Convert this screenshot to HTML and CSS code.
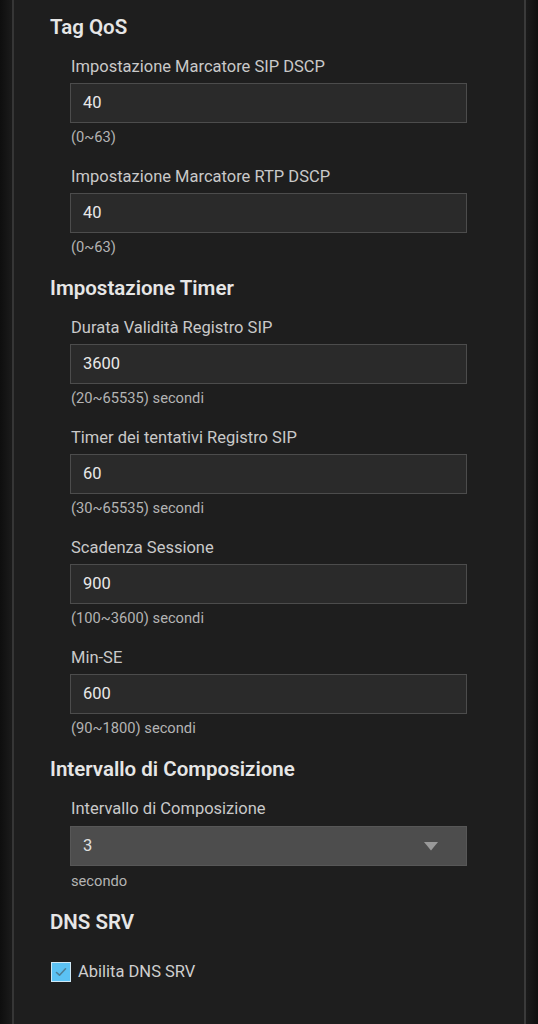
FILE: index.html
```html
<!DOCTYPE html>
<html lang="it">
<head>
<meta charset="utf-8">
<link rel="stylesheet" href="styles.css">
</head>
<body>
<div class="panel">
  <h2 class="section-title">Tag QoS</h2>
  <div class="field">
    <div class="label">Impostazione Marcatore SIP DSCP</div>
    <div class="input">40</div>
    <div class="hint">(0~63)</div>
  </div>
  <div class="field">
    <div class="label">Impostazione Marcatore RTP DSCP</div>
    <div class="input">40</div>
    <div class="hint">(0~63)</div>
  </div>

  <h2 class="section-title">Impostazione Timer</h2>
  <div class="field">
    <div class="label">Durata Validità Registro SIP</div>
    <div class="input">3600</div>
    <div class="hint">(20~65535) secondi</div>
  </div>
  <div class="field">
    <div class="label">Timer dei tentativi Registro SIP</div>
    <div class="input">60</div>
    <div class="hint">(30~65535) secondi</div>
  </div>
  <div class="field">
    <div class="label">Scadenza Sessione</div>
    <div class="input">900</div>
    <div class="hint">(100~3600) secondi</div>
  </div>
  <div class="field">
    <div class="label">Min-SE</div>
    <div class="input">600</div>
    <div class="hint">(90~1800) secondi</div>
  </div>

  <h2 class="section-title">Intervallo di Composizione</h2>
  <div class="field">
    <div class="label">Intervallo di Composizione</div>
    <div class="select">
      <span>3</span>
      <svg class="arrow" width="14" height="9" viewBox="0 0 14 9"><path d="M0 0 H14 L7 8.5 Z" fill="#9a9a9a"/></svg>
    </div>
    <div class="hint">secondo</div>
  </div>

  <h2 class="section-title">DNS SRV</h2>
  <label class="check">
    <span class="box">
      <svg width="14" height="14" viewBox="0 0 14 14"><path d="M2.5 7.5 L5.5 10.2 L11.5 3.8" fill="none" stroke="#4f7f96" stroke-width="1.6" stroke-linecap="round" stroke-linejoin="round"/></svg>
    </span>
    <span class="check-text">Abilita DNS SRV</span>
  </label>
</div>
</body>
</html>
```

FILE: styles.css
```css
html, body {
  margin: 0;
  padding: 0;
}
body {
  width: 538px;
  height: 1024px;
  overflow: hidden;
  font-family: Roboto, "Noto Sans", "Liberation Sans", sans-serif;
  background: linear-gradient(to right, #0e0e0e 0px, #1a1a1a 11px, #1a1a1a 527px, #0e0e0e 538px);
}
.panel {
  margin-left: 12px;
  width: 514px;
  height: 1024px;
  box-sizing: border-box;
  background: #1e1e1e;
  border-left: 2px solid #363636;
  border-right: 2px solid #3a3a3a;
  padding: 13px 0 0 36px;
}
.section-title {
  margin: 0;
  font-size: 20.5px;
  line-height: 28px;
  font-weight: 600;
  color: #e6e6e6;
}
.field {
  padding-left: 20px;
  margin-top: 15px;
  margin-bottom: 17px;
}
.field + .field {
  margin-top: 19px;
}
.label {
  font-size: 16.5px;
  line-height: 22px;
  color: #c9c9c9;
  padding-left: 1px;
}
.input, .select {
  margin-top: 5px;
  width: 397px;
  height: 40px;
  box-sizing: border-box;
  border: 1px solid #4c4c4c;
  background: #2a2a2a;
  color: #e8e8e8;
  font-size: 16.5px;
  line-height: 38px;
  padding-left: 12px;
}
.select {
  margin-top: 6px;
  background: #4d4d4d;
  border-color: #575757;
  display: flex;
  justify-content: space-between;
  align-items: center;
  padding-right: 28px;
  color: #e0e0e0;
}
.select + .hint {
  margin-top: 5px;
}
.arrow {
  display: block;
}
.hint {
  margin-top: 4px;
  font-size: 14.7px;
  line-height: 20px;
  color: #b4b4b4;
  padding-left: 1px;
}
.check {
  display: flex;
  align-items: center;
  margin-top: 25px;
  padding-left: 1px;
}
.box {
  width: 18px;
  height: 18px;
  border: 1px solid #cfe8f5;
  background: #5bc2f4;
  display: flex;
  align-items: center;
  justify-content: center;
}
.check-text {
  margin-left: 7px;
  font-size: 16.5px;
  line-height: 22px;
  color: #cfcfcf;
}
```
